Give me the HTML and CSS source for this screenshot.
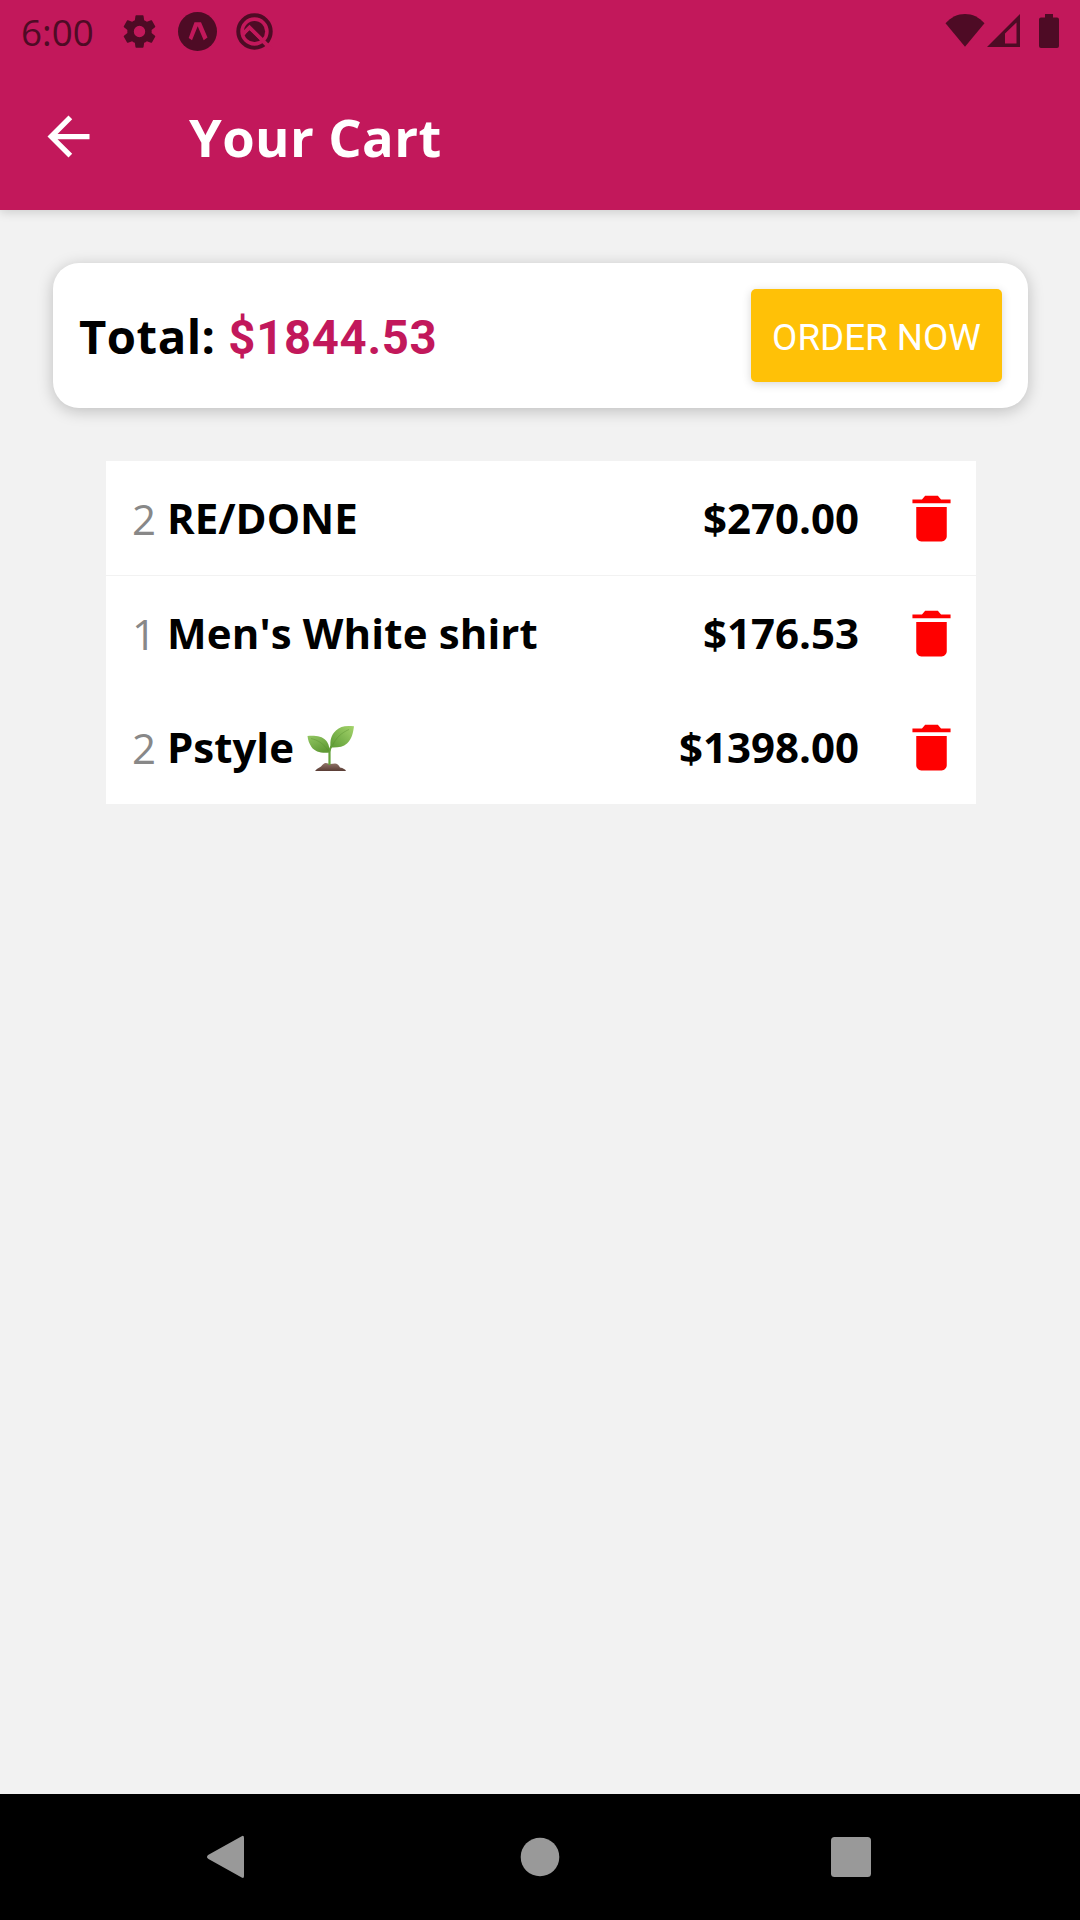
FILE: index.html
```html
<!DOCTYPE html>
<html lang="en">
<head>
<meta charset="utf-8">
<title>Your Cart</title>
<link rel="stylesheet" href="styles.css">
</head>
<body>
<svg class="defs" aria-hidden="true">
  <symbol id="trash" viewBox="0 0 512 512">
    <path d="M128 405.4C128 428.8 147.2 448 170.7 448h170.7c23.4 0 42.6-19.2 42.6-42.6V160H128zM416 96h-80l-26.8-32H202.8L176 96H96v32h320z"/>
  </symbol>
</svg>
<div class="screen">
  <header class="app-header">
    <div class="status-bar">
      <span class="clock">6:00</span>
      <div class="status-group notifications">
        <svg width="39" height="39" viewBox="0 0 24 24"><path d="M19.43 12.98c.04-.32.07-.64.07-.98s-.03-.66-.07-.98l2.11-1.65c.19-.15.24-.42.12-.64l-2-3.46c-.12-.22-.39-.3-.61-.22l-2.49 1c-.52-.4-1.08-.73-1.69-.98l-.38-2.65A.488.488 0 0 0 14 2h-4c-.25 0-.46.18-.49.42l-.38 2.65c-.61.25-1.17.59-1.69.98l-2.49-1c-.23-.09-.49 0-.61.22l-2 3.46c-.13.22-.07.49.12.64l2.11 1.65c-.04.32-.07.65-.07.98s.03.66.07.98l-2.11 1.65c-.19.15-.24.42-.12.64l2 3.46c.12.22.39.3.61.22l2.49-1c.52.4 1.08.73 1.69.98l.38 2.65c.03.24.24.42.49.42h4c.25 0 .46-.18.49-.42l.38-2.65c.61-.25 1.17-.59 1.69-.98l2.49 1c.23.09.49 0 .61-.22l2-3.46c.12-.22.07-.49-.12-.64zM12 15.5A3.5 3.5 0 1 1 12 8.5a3.5 3.5 0 0 1 0 7z"/></svg>
        <svg width="39" height="39" viewBox="0 0 39 39"><circle cx="19.5" cy="19.5" r="19.5"/><path class="cut" d="M16.500 10.300h6.500l6.500 15.200-3.800 2.700-6-14-5.700 14-3.300-2.300z"/></svg>
        <svg width="37" height="37" viewBox="0 0 37 37"><circle class="ring" cx="18.5" cy="18.5" r="16.2"/><circle cx="18.5" cy="18.5" r="10.6"/><path class="cut-line" d="M6.500 21.500L13.500 14.500 35 36"/><path d="M10 21l3.500-3.500 10 9.700q-9 4-13.500-6.200z"/></svg>
      </div>
      <div class="status-group system">
        <svg width="40" height="33" viewBox="0 0 40 33"><path d="M.5 9.3C6 3.2 12.500 0 20 0s14 3.200 19.500 9.300L20 32.700z"/></svg>
        <svg class="signal" width="33" height="33" viewBox="0 0 33 33"><path fill-rule="evenodd" d="M33 0v33H0zM29.500 8.500L18 19.500v10h11.500z"/></svg>
        <svg class="battery" width="20" height="34" viewBox="0 0 20 34"><path d="M6 0h8v3.500h4q2 0 2 2V32q0 2-2 2H2q-2 0-2-2V5.500q0-2 2-2h4z"/></svg>
      </div>
    </div>
    <div class="title-bar">
      <svg class="back" width="63" height="63" viewBox="0 0 24 24"><path d="M20 11H7.830l5.590-5.590L12 4l-8 8 8 8 1.410-1.410L7.830 13H20z"/></svg>
      <h1 class="title">Your Cart</h1>
    </div>
  </header>
  <main class="content">
    <section class="summary">
      <p class="total">Total: <span class="amount">$1844.53</span></p>
      <button class="order">ORDER NOW</button>
    </section>
    <ul class="items">
      <li class="item divided">
        <span class="qty">2</span><span class="name">RE/DONE</span><span class="price">$270.00</span>
        <svg class="trash" width="61" height="61"><use href="#trash"/></svg>
      </li>
      <li class="item">
        <span class="qty">1</span><span class="name spaced">Men's White shirt</span><span class="price">$176.53</span>
        <svg class="trash" width="61" height="61"><use href="#trash"/></svg>
      </li>
      <li class="item">
        <span class="qty">2</span><span class="name">Pstyle
          <svg class="seedling" width="48" height="47" viewBox="0 0 48 47">
            <defs>
              <linearGradient id="leafL" x1="0" y1="0" x2=".6" y2="1"><stop offset="0" stop-color="#93c763"/><stop offset="1" stop-color="#609a35"/></linearGradient>
              <linearGradient id="leafR" x1="1" y1="0" x2="0" y2="1"><stop offset="0" stop-color="#a5d46c"/><stop offset="1" stop-color="#5c9b35"/></linearGradient>
              <linearGradient id="soil" x1="0" y1="0" x2="0" y2="1"><stop offset="0" stop-color="#92756a"/><stop offset="1" stop-color="#593c34"/></linearGradient>
            </defs>
            <path fill="url(#soil)" d="M8 46q2-2.500 6-4.500 3-4 5-3.500l4 1 5-.5q3 0 5 4 5 1 6 3.500z"/>
            <path fill="none" stroke="#65a33b" stroke-width="2.200" d="M22.500 40V27q0-3 2-6"/>
            <path fill="url(#leafL)" d="M.5 11C8 10.500 15 11 19 15.500c3 3.500 3.500 7 3.500 12C15 28.500 8 27 4.500 22 2 18.500 1 15 .5 11z"/>
            <path fill="url(#leafR)" d="M47 1.300C46 8 45 14 40 18.500c-4 3.500-9 4.300-16.500 4C23 15 24 10 29 5.500 33.500 1 39 .3 47 1.300z"/>
            <path fill="none" stroke="#568d2e" stroke-opacity=".4" d="M4 13.500C11 15 17 19 21.500 26M25.500 20.500C29 13 34 8 42 4.500"/>
          </svg></span><span class="price">$1398.00</span>
        <svg class="trash" width="61" height="61"><use href="#trash"/></svg>
      </li>
    </ul>
  </main>
  <nav class="nav-bar">
    <svg width="44" height="44" viewBox="0 0 44 44"><path d="M37.700 1.200Q40 0 40 3v38q0 3-2.300 1.600L4.500 24q-3-2 0-4.200z"/></svg>
    <svg width="40" height="40" viewBox="0 0 40 40"><circle cx="20" cy="20" r="19.300"/></svg>
    <svg width="40" height="40" viewBox="0 0 40 40"><rect width="40" height="40" rx="3.500"/></svg>
  </nav>
</div>
</body>
</html>
```
FILE: styles.css
```css
* { box-sizing: border-box; margin: 0; padding: 0; }
body { background: #f2f2f2; font-family: "Open Sans", sans-serif; color: #000; }
svg { display: block; flex: none; }
.defs { display: none; }

.screen {
  width: 1080px;
  height: 1920px;
  display: flex;
  flex-direction: column;
  background: #f2f2f2;
}

.app-header {
  height: 210px;
  background: #c2185b;
  box-shadow: 0 2px 10px rgba(0, 0, 0, .16);
}
.status-bar {
  height: 63px;
  display: flex;
  align-items: center;
  padding: 0 21px;
  color: #4e0b25;
  fill: #4e0b25;
}
.clock { font: 36.75px/43px "Open Sans", sans-serif; width: 99px; padding-top: 2px; }
.status-group { display: flex; align-items: center; }
.notifications { gap: 19px; }
.cut { fill: #c2185b; }
.cut-line { fill: none; stroke: #c2185b; stroke-width: 4; }
.ring { fill: none; stroke: #4e0b25; stroke-width: 4; }
.system { margin-left: auto; padding-bottom: 2px; }
.signal { margin-left: 2px; }
.battery { margin-left: 19px; }

.title-bar { height: 147px; display: flex; align-items: center; padding-left: 37px; }
.back { fill: #fff; }
.title { margin-left: 89px; color: #fff; font-size: 52.5px; line-height: 72px; font-weight: 700; letter-spacing: .4px; }

.content { flex: 1; padding: 53px 52px 0 53px; }
.summary {
  height: 145px;
  padding: 0 26px;
  display: flex;
  align-items: center;
  justify-content: space-between;
  background: #fff;
  border-radius: 26px;
  box-shadow: 0 3px 16px rgba(0, 0, 0, .22);
}
.total { padding-top: 2px; font-size: 47.25px; line-height: 64px; font-weight: 700; white-space: nowrap; letter-spacing: .5px; }
.amount { font-family: Roboto, sans-serif; color: #c2185b; letter-spacing: .7px; }
.order {
  width: 251px;
  height: 93px;
  padding-top: 4px;
  border: 0;
  border-radius: 5px;
  background: #ffc107;
  color: #fff;
  font: 36.75px/43px Roboto, sans-serif;
  box-shadow: 0 2px 10px rgba(0, 0, 0, .16);
}

.items { list-style: none; margin: 53px 52px 0 53px; background: #fff; }
.item {
  height: 114px;
  display: flex;
  align-items: center;
  padding: 0 14px 0 26px;
  font-size: 42px;
  line-height: 57px;
  font-weight: 700;
}
.divided { height: 115px; border-bottom: 1px solid #f2f2f2; }
.qty { color: #888; font-weight: 400; width: 35px; }
.name { flex: 1; display: flex; align-items: center; gap: 13px; padding-bottom: 2px; }
.spaced { letter-spacing: .14px; }
.seedling { margin-top: 4px; }
.price { margin-right: 42px; padding-bottom: 2px; }
.trash { fill: red; }

.nav-bar {
  height: 126px;
  display: flex;
  align-items: center;
  justify-content: space-between;
  padding: 0 209px 0 204px;
  background: #000;
  fill: #999;
}
```
